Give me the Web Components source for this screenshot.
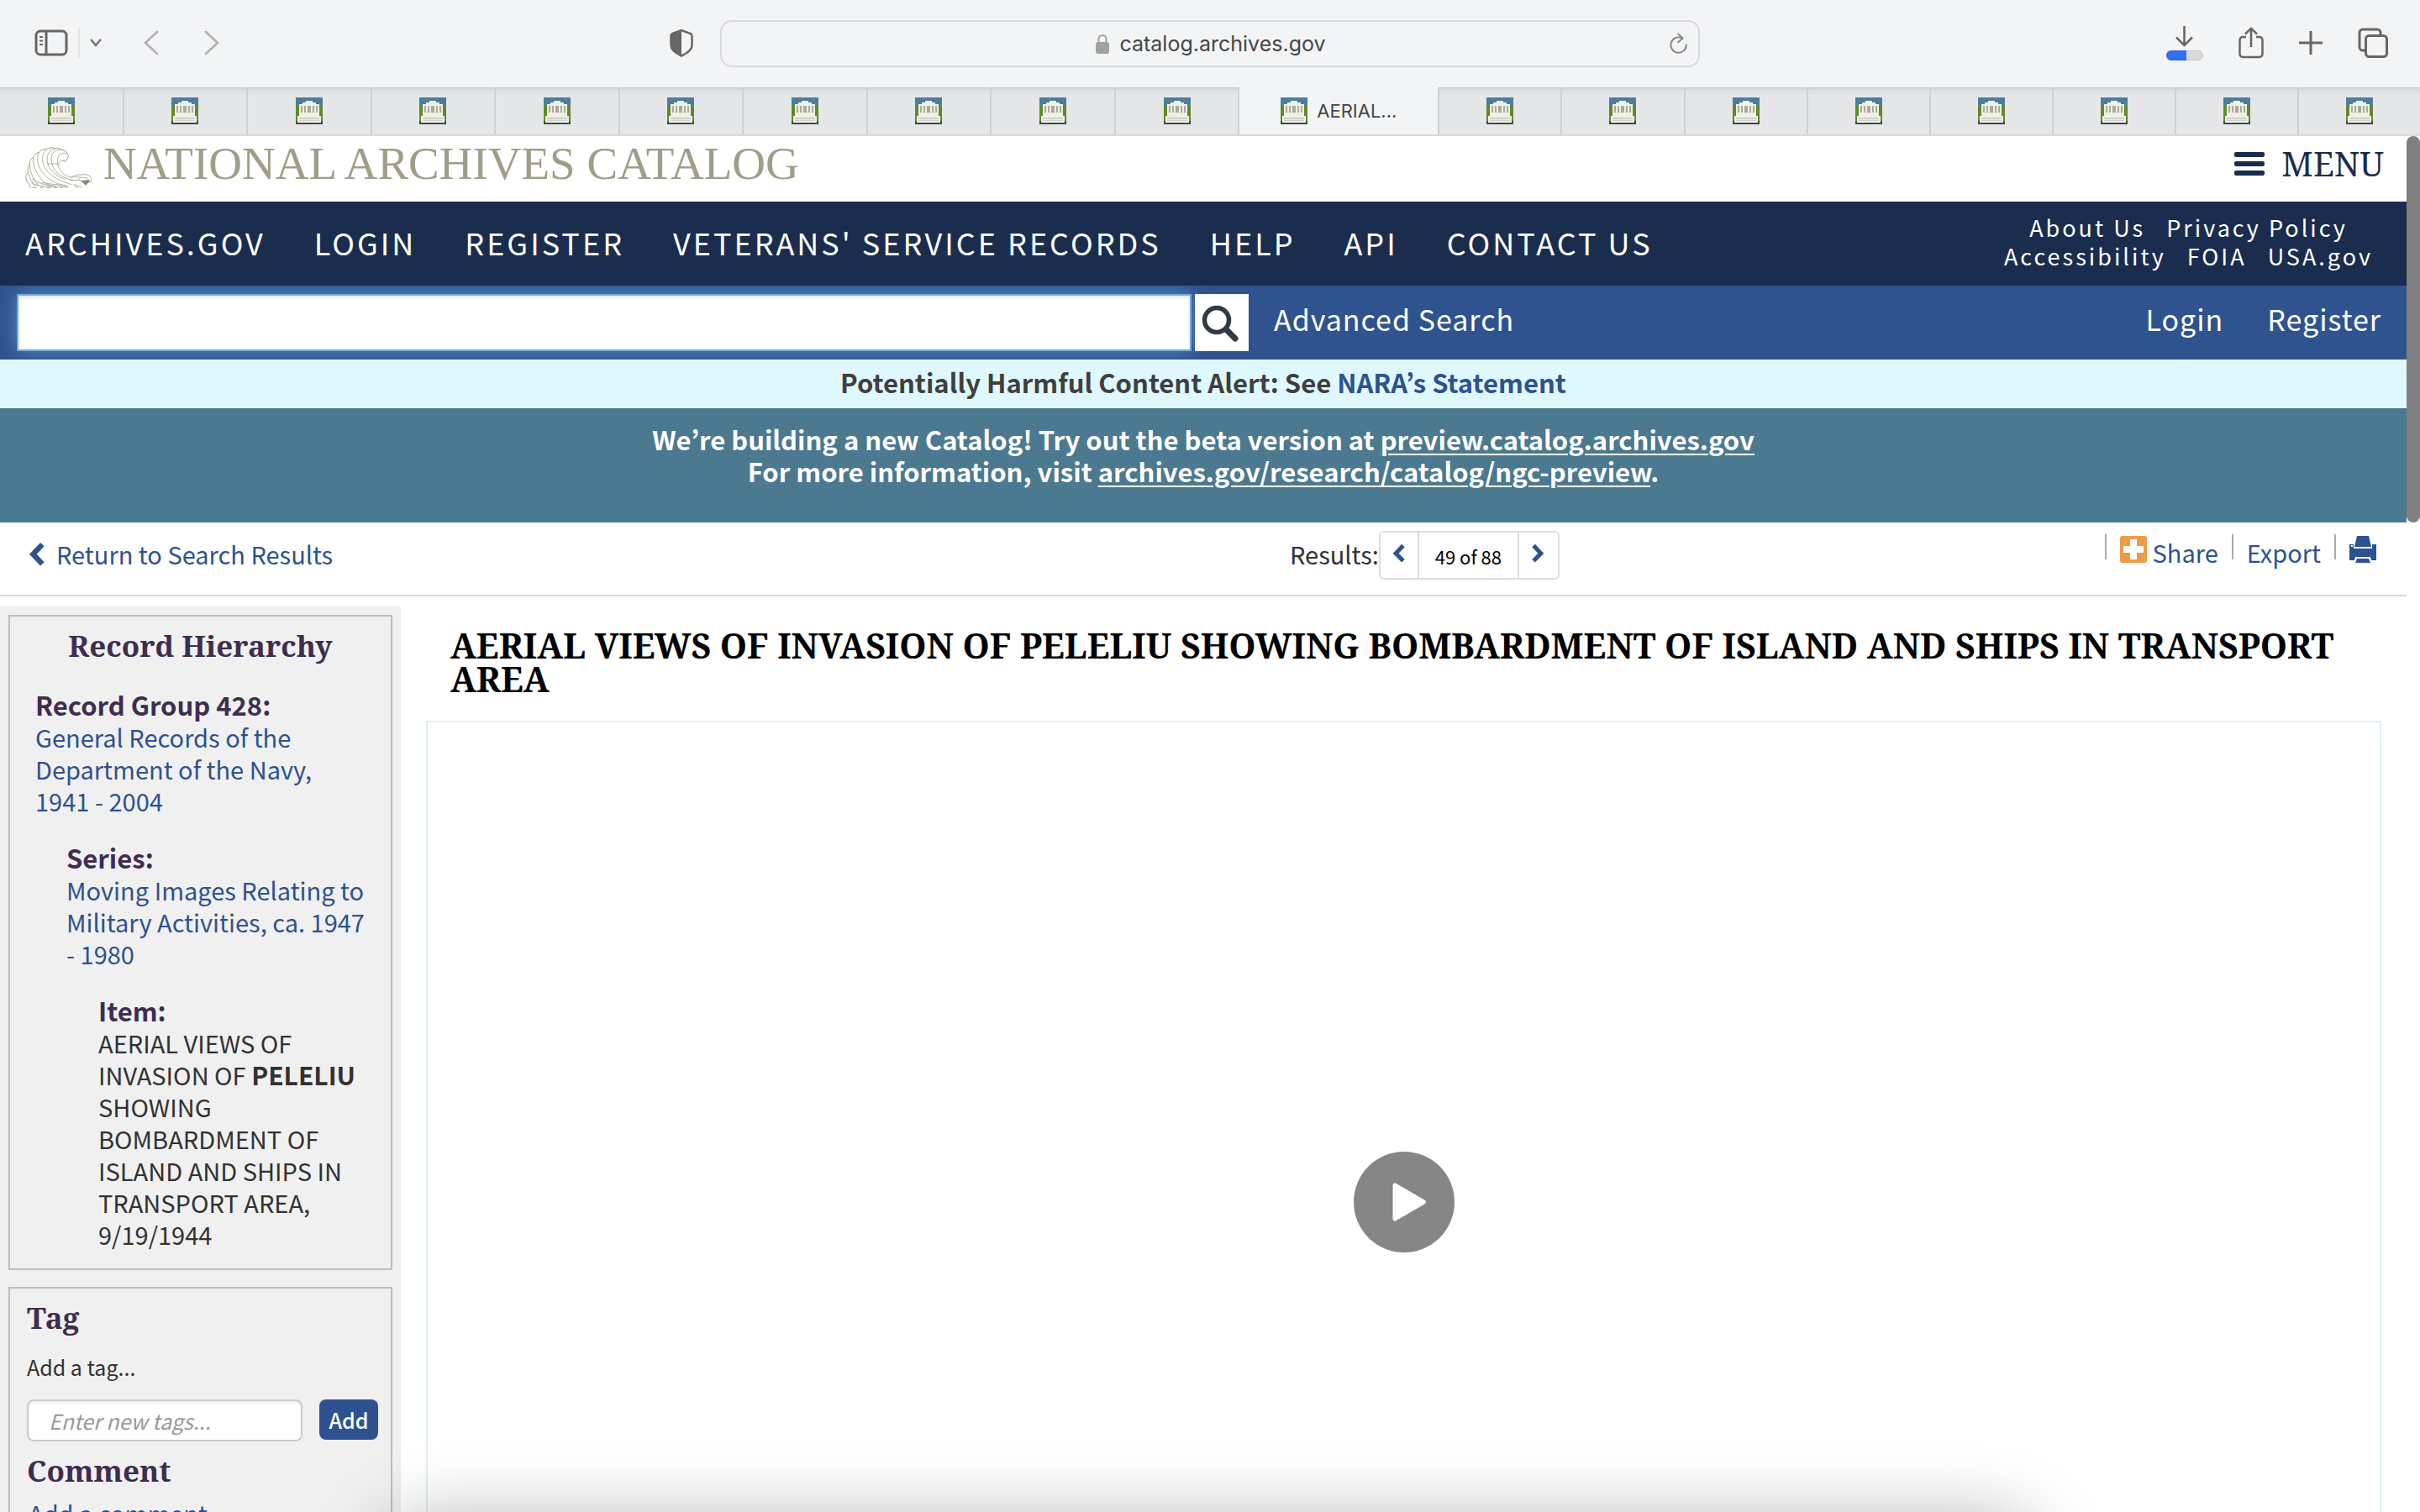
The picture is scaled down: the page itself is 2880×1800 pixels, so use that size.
<!DOCTYPE html>
<html lang="en">
<head>
<meta charset="utf-8">
<title>National Archives Catalog</title>
<style>
  :root {
    --sans: "Noto Sans CJK KR", "Open Sans", sans-serif;
    --serif: "Noto Serif", "Liberation Serif", serif;
    --ui: Inter, "Liberation Sans", sans-serif;
    --navy: #1a2d4e;
    --blue: #2e528f;
    --plum: #3f2d50;
  }
  html, body { height: 100%; margin: 0; }
  body { overflow: hidden; font: 29px/38px var(--sans); color: #323232; background: #fff; }
</style>
</head>
<body>
<browser-window>
  <archives-page></archives-page>
</browser-window>

<script>
const ICONS = {
  sidebar: ['0 0 40 32', '<g fill="none" stroke="#666" stroke-width="3"><rect x="2" y="2" width="36" height="28" rx="5"/><path d="M14 2v28"/><path d="M6 9h4M6 13.500h4M6 18h4" stroke-width="2"/></g>'],
  chevdown: ['0 0 16 12', '<path d="M2 2l6 7 6-7" fill="none" stroke="#7a7b7c" stroke-width="3" stroke-linecap="round"/>'],
  back: ['0 0 18 30', '<path d="M16 2L2 15l14 13" fill="none" stroke="#b4b5b6" stroke-width="3" stroke-linecap="round" stroke-linejoin="round"/>'],
  forward: ['0 0 18 30', '<path d="M2 2l14 13L2 28" fill="none" stroke="#b4b5b6" stroke-width="3" stroke-linecap="round" stroke-linejoin="round"/>'],
  shield: ['0 0 28 34', '<path d="M14 2L3 6c-1 1-1.500 2-1.500 3v11c0 5 5 9 12.500 12.500 7.500-3.500 12.500-7.500 12.500-12.500V9c0-1-.5-2-1.500-3z" fill="none" stroke="#666" stroke-width="2.500"/><path d="M14 2L3 6c-1 1-1.500 2-1.500 3v11c0 5 5 9 12.500 12.500z" fill="#666"/>'],
  lock: ['0 0 16 24', '<path d="M3.500 11V6.500a4.500 4.500 0 019 0V11" fill="none" stroke="#a0a1a1" stroke-width="2"/><rect y="10" width="16" height="14" rx="3" fill="#a0a1a1"/>'],
  reload: ['0 0 24 28', '<g fill="none" stroke="#808182" stroke-width="2" stroke-linecap="round" stroke-linejoin="round"><path d="M21.500 15.500A10 10 0 1 1 16 7"/><path d="M11 1.500l6 5.500-6 5.500"/></g>'],
  download: ['0 0 44 44', '<path d="M21.500 2v22M12 15.500l9.500 9.500 9.500-9.500" fill="none" stroke="#666" stroke-width="2.500"/><rect x=".5" y="31.500" width="43" height="11" rx="5.500" fill="#dadada" stroke="#c8c8c8"/><path d="M6 31h18v12H6a6 6 0 010-12z" fill="#3070ee"/>'],
  share: ['0 0 30 38', '<g fill="none" stroke="#666" stroke-width="2.500"><path d="M9 12H5a3.500 3.500 0 00-3.500 3.500v17A3.500 3.500 0 005 36h20a3.500 3.500 0 003.500-3.500v-17A3.500 3.500 0 0025 12h-4"/><path d="M15 24V2M8 8.500L15 1.800l7 6.700"/></g>'],
  plus: ['0 0 28 28', '<path d="M14 1v26M1 14h26" stroke="#666" stroke-width="3" stroke-linecap="round"/>'],
  tabs: ['0 0 36 36', '<g fill="none" stroke="#666" stroke-width="3"><path d="M9 27H6a4 4 0 01-4-4V6a4 4 0 014-4h17a4 4 0 014 4v3"/><rect x="9.500" y="9.500" width="25" height="25" rx="4"/></g>'],
  favicon: ['0 0 32 32', '<path fill="#4e7d9c" d="M0 0h32v12H0z"/><path fill="#5f8a2c" d="M0 10h32v20H0z"/><path fill="#43474a" d="M0 28h32v4H0z"/><path fill="#eff0e6" d="M12 4h8v2h4v2h4v14h2v8H2v-8h2V8h4V6h4z"/><path fill="#a9a99c" d="M6 10h2v8H6zM10 10h2v8h-2zM14 10h4v8h-4zM20 10h2v8h-2zM24 10h2v8h-2z"/><path fill="#cfcfc8" d="M4 24h24v2H4zM4 27h24v1H4z"/>'],
  eagle: ['88 223 244 152', `<g fill="none" stroke="#a3a08c" stroke-width="2.600" stroke-linecap="round">
    <path d="M108 371c-3-4-4-8-3-11-9-5-15-16-14-28 0-9 3-14 8-16-4-13-2-24 5-31-1-11 4-19 13-23 3-10 10-17 21-20 6-8 17-12 27-11 8-6 22-7 32-3 9-3 20 0 27 6 10 2 19 10 20 20 1 9-4 17-11 21l-7-2" stroke-width="3"/>
    <path d="M104 284c1 25 8 50 32 78M99 316c5 20 13 36 27 50M117 262c-1 28 9 58 40 88 12 10 26 15 40 18"/>
    <path d="M138 243c-15 26 0 72 42 100 14 9 32 16 52 20"/>
    <path d="M165 231c-24 22-18 66 18 94 18 14 44 26 72 34"/>
    <path d="M197 228c-30 8-38 42-20 70 12 20 32 34 56 42"/>
    <path d="M224 234c-30-6-46 14-40 44 3 22 16 38 36 50 12 7 28 14 44 16"/>
    <path d="M238 246c-16-6-32 6-33 24-1 22 8 40 24 52 8 6 20 10 30 12"/>
    <path d="M229 275c-6-6-14-2-17 6M168 283c18 4 34-2 44 2"/>
    <path d="M114 340c20 12 40 20 60 22s48 6 66 6M112 354c24 12 50 12 76 13M116 371h12M142 370h12M166 371h14M194 371h10M216 371h8M236 369h8M150 352c30 8 60 6 92 12"/>
    <path d="M256 334c8-8 20-11 34-10 14-4 30 0 36 9 4 6 3 14-1 18-2-6-8-9-14-8"/>
    <path d="M262 330c8 0 16 4 30 4 10-1 20 0 26 5M252 342c12 4 20 0 34 2M264 360c10 3 22 5 30 9M270 367l10 4M284 340l8 6" />
    </g><path d="M291 346c8-3 20-4 32 0-1 4-5 7-9 10l-6 7c-3-5-11-9-17-17z" fill="#8b8974"/>`],
  menu: ['0 0 36 30', '<path fill="#1a2d4e" d="M2 1h32q2 0 2 2v2q0 2-2 2H2Q0 7 0 5V3q0-2 2-2zM2 12h32q2 0 2 2v2q0 2-2 2H2q-2 0-2-2v-2q0-2 2-2zM2 23h32q2 0 2 2v2q0 2-2 2H2q-2 0-2-2v-2q0-2 2-2z"/>'],
  search: ['0 0 44 44', '<circle cx="18" cy="18" r="14.500" fill="none" stroke="#323a45" stroke-width="5.500"/><path d="M29 29l11 11" stroke="#323a45" stroke-width="7" stroke-linecap="round"/>'],
  prev: ['0 0 18 28', '<path d="M15.500 3L5 14l10.500 11" fill="none" stroke="#2e528f" stroke-width="6"/>'],
  next: ['0 0 18 28', '<path d="M2.500 3L13 14 2.500 25" fill="none" stroke="#2e528f" stroke-width="6"/>'],
  addthis: ['0 0 32 32', '<rect width="32" height="32" rx="3" fill="#ec9c45"/><path fill="#fff" d="M12 4h8v8h8v8h-8v8h-8v-8H4v-8h8z"/>'],
  printer: ['0 0 32 32', '<g fill="#2e528f"><path d="M9 0h14l3 13H6zM0 10h5v5h22v-5h5v19h-6l-1-4H7l-1 4H0z"/><path d="M9 27h14l2 5H7z"/></g><path fill="#fff" d="M2 11h2v2H2z"/>'],
  play: ['0 0 120 120', '<circle cx="60" cy="60" r="60" fill="#868686"/><path d="M49 40l34.500 20L49 80z" fill="#fff" stroke="#fff" stroke-width="5" stroke-linejoin="round"/>'],
};

function define(name, css, html) {
  const tpl = document.createElement('template');
  tpl.innerHTML = `<style>*{box-sizing:border-box} a{color:inherit;text-decoration:none} button,input{font:inherit;color:inherit;margin:0} ${css}</style>${html}`;
  customElements.define(name, class extends HTMLElement {
    constructor() {
      super();
      this.attachShadow({ mode: 'open' }).append(tpl.content.cloneNode(true));
    }
  });
}

/* <ui-icon name size> : width in px; height follows the view box */
customElements.define('ui-icon', class extends HTMLElement {
  connectedCallback() {
    if (this.shadowRoot) return;
    const [box, body] = ICONS[this.getAttribute('name')];
    const w = this.getAttribute('size');
    this.attachShadow({ mode: 'open' }).innerHTML =
      `<style>:host{display:block;flex:none;width:${w}px}svg{display:block;width:100%}</style><svg viewBox="${box}" aria-hidden="true">${body}</svg>`;
  }
});

define('browser-toolbar', `
  :host{display:grid;grid-template-columns:minmax(0,1fr) 1166px minmax(0,1fr);align-items:center;height:104px;background:#f3f4f6;font:25px/32px var(--ui)}
  button{padding:0;border:0;background:none;display:block}
  .side{display:flex;align-items:center}
  .left{padding:0 32px 2px 41px}
  .left .rule{width:2px;height:36px;margin:0 12px;background:#e3e4e6}
  .back{margin-left:50px}.fwd{margin-left:54px}.shield{margin-left:auto}
  .right{justify-content:flex-end;gap:42px;padding:0 38px 3px 0}
  .url{display:flex;align-items:center;height:56px;border:2px solid #d8d9db;border-radius:14px;padding:0 12px;color:#454647}
  .host{display:flex;align-items:center;justify-content:center;gap:12px;flex:1;padding-left:24px}
`, `
  <div class="side left">
    <button aria-label="Sidebar"><ui-icon name="sidebar" size="40"></ui-icon></button>
    <span class="rule"></span>
    <button aria-label="Tab groups"><ui-icon name="chevdown" size="14"></ui-icon></button>
    <button class="back" aria-label="Back"><ui-icon name="back" size="18"></ui-icon></button>
    <button class="fwd" aria-label="Forward"><ui-icon name="forward" size="18"></ui-icon></button>
    <button class="shield" aria-label="Privacy report"><ui-icon name="shield" size="28"></ui-icon></button>
  </div>
  <div class="url">
    <div class="host"><ui-icon name="lock" size="16"></ui-icon><span>catalog.archives.gov</span></div>
    <button aria-label="Reload"><ui-icon name="reload" size="22"></ui-icon></button>
  </div>
  <div class="side right">
    <button aria-label="Downloads"><ui-icon name="download" size="44"></ui-icon></button>
    <button aria-label="Share"><ui-icon name="share" size="30"></ui-icon></button>
    <button aria-label="New tab"><ui-icon name="plus" size="28"></ui-icon></button>
    <button aria-label="Tab overview"><ui-icon name="tabs" size="36"></ui-icon></button>
  </div>`);

define('browser-tab', `
  :host{display:flex;flex:101 1 0;min-width:0;align-items:center;justify-content:center;gap:11px;border-right:2px solid #cfd0d2;background:linear-gradient(#c2c3c5,#dadbdd 2px,#e5e6e8 10px);font:22px/28px var(--ui);color:#454647}
  :host([active]){flex:0 0 238px;background:#f3f4f6}
  :host(:last-child){border-right:0}
`, `<ui-icon name="favicon" size="32"></ui-icon><slot></slot>`);

define('tab-strip', `
  :host{display:flex;height:58px;border-bottom:2px solid #d9dadc;background:#e5e6e8}
  browser-tab{box-sizing:border-box}
  browser-tab[active] ~ browser-tab{flex-grow:100}
`, Array.from({ length: 19 }, (_, i) => i === 10 ? '<browser-tab active>AERIAL...</browser-tab>' : '<browser-tab></browser-tab>').join(''));

define('browser-window', `
  :host{display:flex;flex-direction:column;height:100vh;overflow:hidden;position:relative}
  .view{display:flex;flex:1;min-height:0}
  main{flex:1;min-width:0}
  .track{width:16px;flex:none;background:#fff}
  .thumb{height:460px;border-radius:8px;background:#808080}
  .dock{position:absolute;left:16%;right:16%;top:100%;height:140px;border-radius:40px;box-shadow:0 12px 90px rgba(0,0,0,.32);pointer-events:none}
`, `
  <browser-toolbar></browser-toolbar>
  <tab-strip></tab-strip>
  <div class="view"><main><slot></slot></main><div class="track"><div class="thumb"></div></div></div>
  <div class="dock"></div>`);

define('site-header', `
  :host{display:flex;align-items:center;justify-content:space-between;height:78px;padding:0 27px 12px 30px;background:#fff}
  .logo{display:flex;align-items:flex-end;gap:13px;font:55px/60px "Liberation Serif",serif;color:#a09d89}
  button{display:flex;align-items:center;gap:20px;border:0;padding:0;background:none;font:40px/48px var(--serif);color:var(--navy)}
`, `
  <a class="logo" href="#"><ui-icon name="eagle" size="80"></ui-icon><span>NATIONAL ARCHIVES CATALOG</span></a>
  <button><ui-icon name="menu" size="36"></ui-icon>MENU</button>`);

define('site-nav', `
  :host{display:flex;align-items:center;justify-content:space-between;height:100px;padding:0 40px 4px 30px;background:var(--navy);color:#fff}
  nav{display:flex;gap:58px;font-size:36px;line-height:48px;letter-spacing:3px}
  .small{display:flex;flex-direction:column;font-size:27px;line-height:34px;letter-spacing:3px}
  .small div{display:flex;gap:25px;justify-content:center}
`, `
  <nav><a href="#">ARCHIVES.GOV</a><a href="#">LOGIN</a><a href="#">REGISTER</a><a href="#">VETERANS' SERVICE RECORDS</a><a href="#">HELP</a><a href="#">API</a><a href="#">CONTACT US</a></nav>
  <div class="small"><div><a href="#">About Us</a><a href="#">Privacy Policy</a></div><div><a href="#">Accessibility</a><a href="#">FOIA</a><a href="#">USA.gov</a></div></div>`);

define('search-band', `
  :host{display:flex;height:88px;padding:10px 30px 10px 20px;background:#2f538f;color:#fff;font-size:34px;letter-spacing:1px;overflow:hidden}
  form{display:flex;gap:4px;width:1466px;flex:none}
  input{flex:1;min-width:0;border:2px solid #74a9e3;background:#fff;padding:0 20px;color:#323232;outline:0;box-shadow:inset 0 2px 4px rgba(0,0,0,.12),0 0 22px rgba(102,160,220,.7)}
  button{width:64px;border:0;padding:2px 4px 0 0;background:#fff;display:flex;align-items:center;justify-content:center}
  nav{display:flex;flex:1;gap:52px;align-items:center;padding:0 0 8px 30px}
  nav a:first-child{margin-right:auto}
`, `
  <form><input type="text" aria-label="Search the catalog"><button type="button" aria-label="Search"><ui-icon name="search" size="44"></ui-icon></button></form>
  <nav><a href="#">Advanced Search</a><a href="#">Login</a><a href="#">Register</a></nav>`);

define('notice-bars', `
  :host{display:block;text-align:center;font-weight:700;font-size:31px}
  p{margin:0}
  .alert{padding:8px 0 12px;background:#dff8fd;color:#3f3f3f}
  .alert a{color:var(--blue)}
  .beta{padding:18px 0 42px;background:#4b7990;color:#fff}
  .beta a{text-decoration:underline;text-decoration-thickness:2px;text-underline-offset:4px}
`, `
  <p class="alert">Potentially Harmful Content Alert: See <a href="#">NARA’s Statement</a></p>
  <p class="beta">We’re building a new Catalog! Try out the beta version at <a href="#">preview.catalog.archives.gov</a><br>For more information, visit <a href="#">archives.gov/research/catalog/ngc-preview</a>.</p>`);

define('result-pager', `
  :host{display:flex;line-height:54px}
  .box{display:flex;height:58px;border:2px solid #ddd;border-radius:6px;font-size:21px;color:#000;overflow:hidden}
  .box > *{display:flex;justify-content:center;border:0;border-right:2px solid #ddd;background:#fff;padding:0}
  .box > :last-child{border-right:0}
  button{width:46px;padding-top:13px !important}
  span.n{width:119px;line-height:56px;font-size:22px}
`, `Results:<div class="box"><button aria-label="Previous result"><ui-icon name="prev" size="15"></ui-icon></button><span class="n">49 of 88</span><button aria-label="Next result"><ui-icon name="next" size="15"></ui-icon></button></div>`);

define('result-bar', `
  :host{display:grid;grid-template-columns:1535fr 1329fr;height:88px;padding-top:10px;border-bottom:2px solid #d5d6d7}
  .return{display:flex;gap:14px;line-height:54px;color:var(--blue);padding-left:34px}
  .return ui-icon{margin-top:13px}
  .right{display:flex;justify-content:space-between;padding-right:36px}
  .actions{display:flex;gap:16px;line-height:50px;color:var(--blue)}
  .actions i{width:2px;height:30px;margin-top:4px;background:#aaa}
  .actions a{display:flex;gap:7px}
  .actions ui-icon{margin-top:6px}
`, `
  <a class="return" href="#"><ui-icon name="prev" size="19"></ui-icon>Return to Search Results</a>
  <div class="right"><result-pager></result-pager>
    <div class="actions"><i></i><a href="#"><ui-icon name="addthis" size="32"></ui-icon>Share</a><i></i><a href="#">Export</a><i></i><a href="#" aria-label="Print"><ui-icon name="printer" size="32"></ui-icon></a></div>
  </div>`);

define('side-card', `
  :host{display:block;border:2px solid #bdbdbd;padding:16px 15px 22px 20px}
`, `<slot></slot>`);

define('hierarchy-level', `
  :host{display:block;margin-bottom:30px}
  :host(:last-child){margin-bottom:0}
  b{display:block;color:var(--plum);font-size:31px}
`, `<b><slot name="label"></slot></b><slot></slot>`);

define('record-hierarchy', `
  :host{display:block}
  h2{margin:0 0 32px;font:700 35px/38px var(--serif);color:var(--plum);text-align:center}
  hierarchy-level{margin-left:2px}
  .two{margin-left:39px}.three{margin-left:77px}
  a{color:var(--blue)}
  strong{font-size:30px;line-height:30px}
`, `
  <h2>Record Hierarchy</h2>
  <hierarchy-level><span slot="label">Record Group 428:</span><a href="#">General Records of the Department of the Navy, 1941 - 2004</a></hierarchy-level>
  <hierarchy-level class="two"><span slot="label">Series:</span><a href="#">Moving Images Relating to Military Activities, ca. 1947 - 1980</a></hierarchy-level>
  <hierarchy-level class="three"><span slot="label">Item:</span>AERIAL VIEWS OF INVASION OF <strong>PELELIU</strong> SHOWING BOMBARDMENT OF ISLAND AND SHIPS IN TRANSPORT AREA, 9/19/1944</hierarchy-level>`);

define('tag-panel', `
  :host{display:block}
  h2{margin:0;font:700 35px/38px var(--serif);color:var(--plum)}
  label{display:block;margin:20px 0;font-size:25px}
  .row{display:flex;gap:20px;margin-bottom:16px;font-size:25px}
  input{width:328px;height:50px;border:2px solid #ccc;border-radius:8px;padding:0 24px;background:#fff;box-shadow:inset 0 2px 3px rgba(0,0,0,.08)}
  input::placeholder{color:#999;font-style:italic;opacity:1}
  button{width:70px;height:48px;border:0;border-radius:8px;padding:0;background:var(--blue);color:#fff;font-weight:500}
  .comment{display:block;margin-top:12px;padding-left:2px;color:var(--blue)}
`, `
  <h2>Tag</h2>
  <label for="tags">Add a tag...</label>
  <div class="row"><input id="tags" type="text" placeholder="Enter new tags..."><button>Add</button></div>
  <h2>Comment</h2>
  <a class="comment" href="#">Add a comment</a>`);

define('record-sidebar', `
  :host{display:flex;flex-direction:column;gap:20px;width:477px;flex:none;padding:10px;background:#f0f0f0}
  .h{padding:16px 28px 22px}
`, `
  <side-card class="h"><record-hierarchy></record-hierarchy></side-card>
  <side-card><tag-panel></tag-panel></side-card>`);

define('media-viewer', `
  :host{display:flex;align-items:center;justify-content:center;height:1146px;border:2px solid #e0eff7;background:#fff}
  button{border:0;padding:0;background:none}
`, `<button aria-label="Play video"><ui-icon name="play" size="120"></ui-icon></button>`);

define('record-main', `
  :host{display:block;flex:1;min-width:0;padding:26px 30px 0}
  h1{margin:0 0 30px;padding-left:29px;font:700 41px/40px var(--serif);color:#000}
`, `<h1><slot></slot></h1><media-viewer></media-viewer>`);

define('archives-page', `
  :host{display:block}
  .body{display:flex;padding-top:12px}
`, `
  <site-header></site-header>
  <site-nav></site-nav>
  <search-band></search-band>
  <notice-bars></notice-bars>
  <result-bar></result-bar>
  <div class="body">
    <record-sidebar></record-sidebar>
    <record-main>AERIAL VIEWS OF INVASION OF PELELIU SHOWING BOMBARDMENT OF ISLAND AND SHIPS IN TRANSPORT AREA</record-main>
  </div>`);
</script>
</body>
</html>
